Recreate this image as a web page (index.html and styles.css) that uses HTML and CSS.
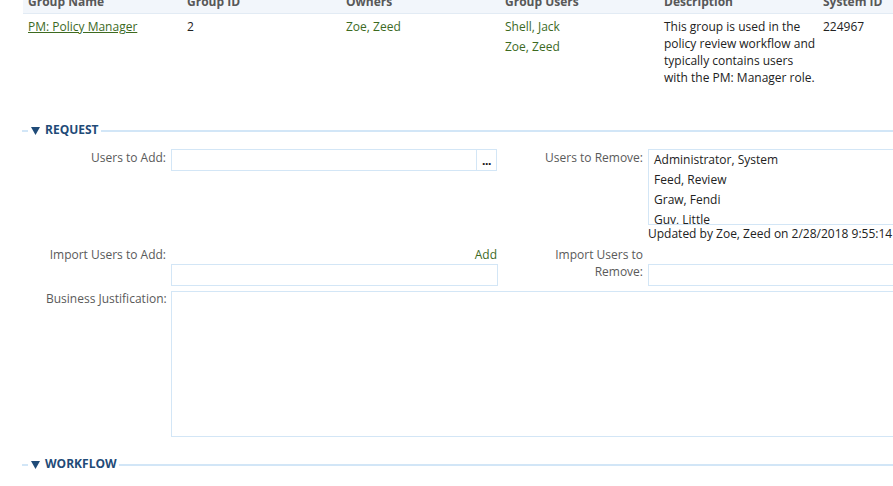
FILE: index.html
```html
<!DOCTYPE html>
<html>
<head>
<meta charset="utf-8">
<link rel="stylesheet" href="styles.css">
</head>
<body>
<div class="page">
  <div class="grid-table">
    <div class="th">Group Name</div>
    <div class="th">Group ID</div>
    <div class="th">Owners</div>
    <div class="th">Group Users</div>
    <div class="th">Description</div>
    <div class="th">System ID</div>

    <div class="td"><a class="link underline" href="#">PM: Policy Manager</a></div>
    <div class="td">2</div>
    <div class="td"><span class="link">Zoe, Zeed</span></div>
    <div class="td">
      <div class="user-item link">Shell, Jack</div>
      <div class="user-item link">Zoe, Zeed</div>
    </div>
    <div class="td desc">This group is used in the policy review workflow and typically contains users with the PM: Manager role.</div>
    <div class="td">224967</div>
  </div>

  <div class="section-head section-request">
    <span class="dash"></span>
    <svg class="caret" width="9" height="8" viewBox="0 0 9 8"><polygon points="0,0 9,0 4.5,8" fill="#1f4b78"/></svg>
    <span class="section-title">REQUEST</span>
    <span class="rule"></span>
  </div>

  <div class="form">
    <div class="label label-left">Users to Add:</div>
    <div class="field">
      <div class="picker">
        <div class="picker-input"></div>
        <div class="picker-btn">...</div>
      </div>
    </div>
    <div class="label label-right">Users to Remove:</div>
    <div class="field">
      <div class="listbox">
        <div class="list-item">Administrator, System</div>
        <div class="list-item">Feed, Review</div>
        <div class="list-item">Graw, Fendi</div>
        <div class="list-item">Guy, Little</div>
      </div>
      <div class="updated">Updated by Zoe, Zeed on 2/28/2018 9:55:14 AM</div>
    </div>

    <div class="label label-left">Import Users to Add:</div>
    <div class="field">
      <div class="add-line"><span class="link">Add</span></div>
      <div class="text-input"></div>
    </div>
    <div class="label label-right">Import Users to Remove:</div>
    <div class="field field-offset">
      <div class="text-input"></div>
    </div>

    <div class="label label-left">Business Justification:</div>
    <div class="field field-wide">
      <div class="textarea"></div>
    </div>
  </div>

  <div class="section-head section-workflow">
    <span class="dash"></span>
    <svg class="caret" width="9" height="8" viewBox="0 0 9 8"><polygon points="0,0 9,0 4.5,8" fill="#1f4b78"/></svg>
    <span class="section-title">WORKFLOW</span>
    <span class="rule"></span>
  </div>
</div>
</body>
</html>
```

FILE: styles.css
```css
html, body {
  margin: 0;
  padding: 0;
  overflow: hidden;
  background: #ffffff;
}

body {
  font-family: "Open Sans", "Liberation Sans", Arial, sans-serif;
  font-size: 12px;
  line-height: 17px;
  color: #222222;
}

.page {
  width: 1000px;
}

.grid-table {
  display: grid;
  grid-template-columns: repeat(6, 159px);
  margin-left: 23px;
  margin-top: -11px;
}

.th {
  background: #f2f6fb;
  border-bottom: 1px solid #e2ebf4;
  padding: 4px 5px 3px;
  font-weight: bold;
  color: #585858;
  white-space: nowrap;
}

.td {
  padding: 4px 5px 0;
}

.link {
  color: #3d6a1f;
  text-decoration: none;
}

.underline {
  text-decoration: underline;
}

.user-item {
  margin-bottom: 3px;
}

.desc {
  padding-right: 0;
}

.section-head {
  display: flex;
  align-items: flex-start;
  margin-left: 22px;
  height: 17px;
}

.section-request {
  margin-top: 35px;
}

.section-workflow {
  margin-top: 18px;
}

.dash {
  width: 6px;
  height: 2px;
  margin-top: 9px;
  background: #d2e6f7;
}

.caret {
  margin-left: 3px;
  margin-top: 6px;
}

.section-title {
  margin-left: 5px;
  font-weight: bold;
  color: #1f4b78;
}

.rule {
  flex: 1;
  height: 2px;
  margin-top: 9px;
  margin-left: 2px;
  background: #d2e6f7;
}

.form {
  display: grid;
  grid-template-columns: 125px 327px 150px 327px;
  row-gap: 4px;
  margin-left: 46px;
  margin-top: 11px;
}

.label {
  text-align: right;
  padding-right: 5px;
  color: #5a5a5a;
}

.label-left {
  white-space: nowrap;
}

.label-right {
  padding-left: 25px;
}

.picker {
  display: flex;
  height: 22px;
  box-sizing: border-box;
  border: 1px solid #d3e6f6;
  width: 326px;
}

.picker-input {
  flex: 1;
}

.picker-btn {
  width: 19px;
  border-left: 1px solid #d3e6f6;
  font-weight: bold;
  color: #111;
  text-align: center;
  line-height: 22px;
  letter-spacing: -0.5px;
}

.listbox {
  height: 76px;
  box-sizing: border-box;
  border: 1px solid #d3e6f6;
  overflow: hidden;
  padding-left: 5px;
}

.list-item {
  line-height: 20px;
  white-space: nowrap;
}

.updated {
  white-space: nowrap;
}

.add-line {
  text-align: right;
  padding-right: 1px;
}

.text-input {
  height: 22px;
  box-sizing: border-box;
  border: 1px solid #d3e6f6;
  margin-top: 1px;
}

.field-offset {
  padding-top: 17px;
}

.field-wide {
  grid-column: 2 / span 3;
}

.textarea {
  height: 146px;
  box-sizing: border-box;
  border: 1px solid #d3e6f6;
  margin-top: 1px;
}
```
